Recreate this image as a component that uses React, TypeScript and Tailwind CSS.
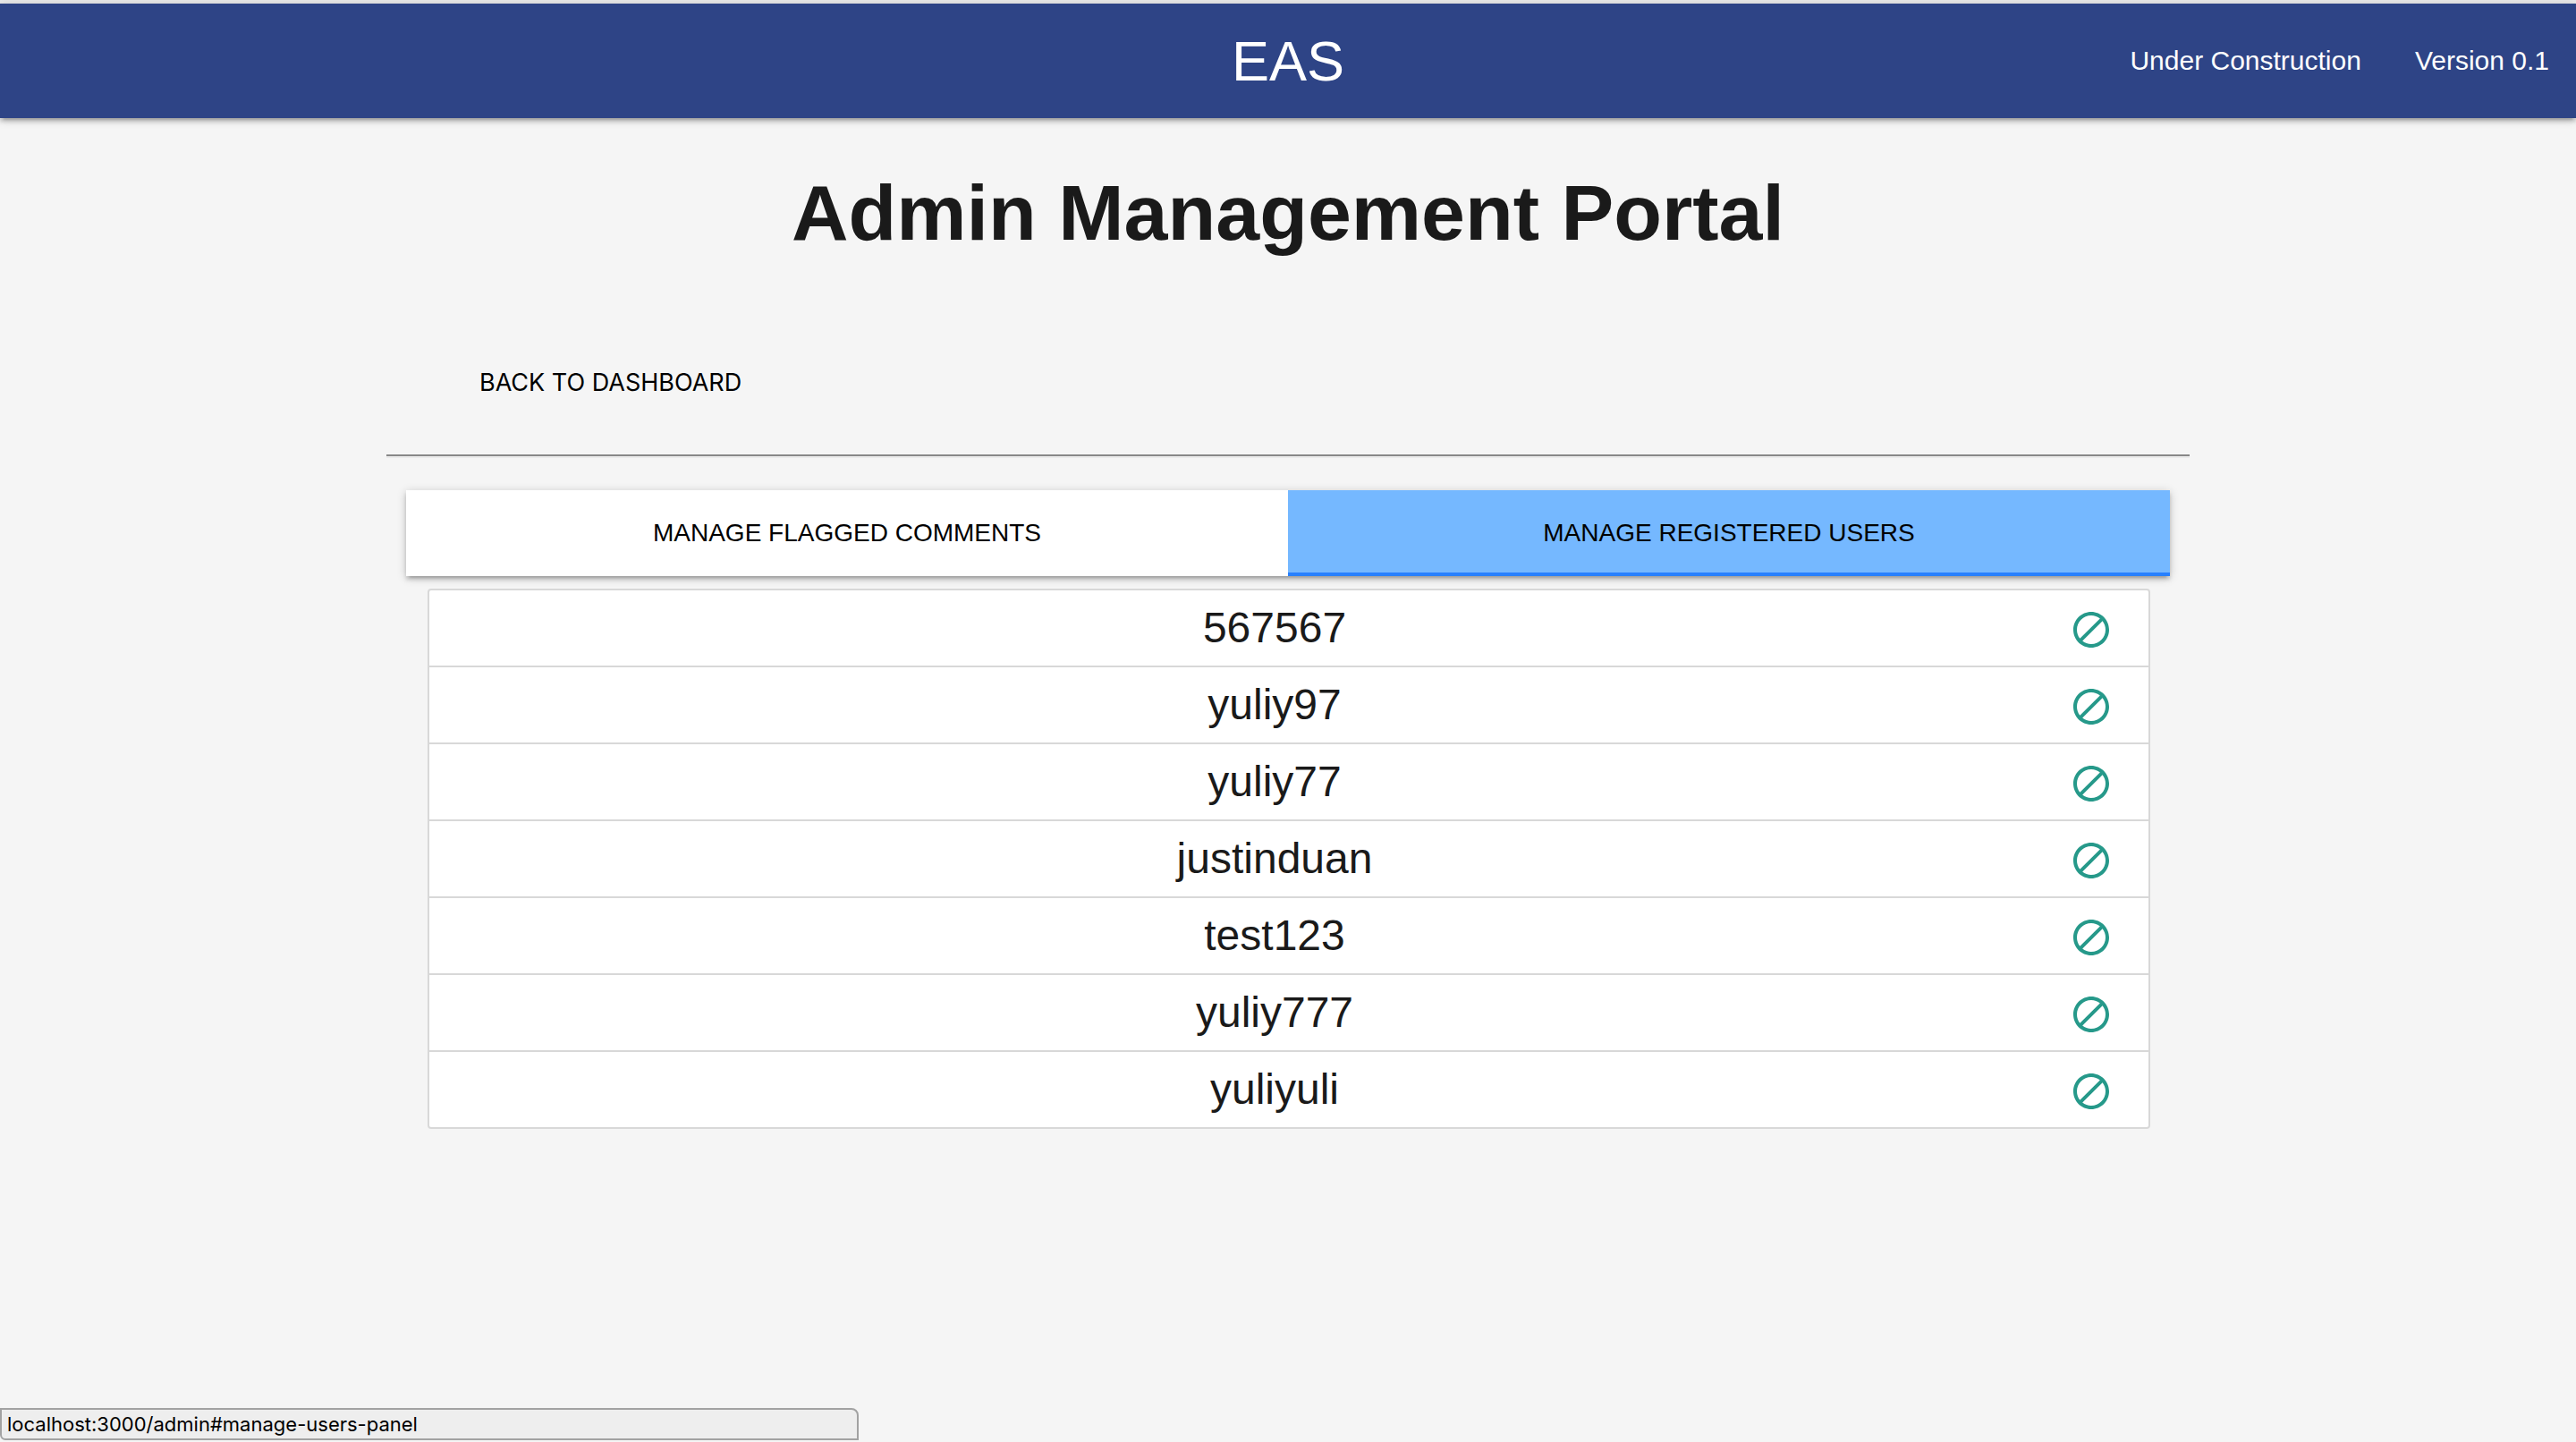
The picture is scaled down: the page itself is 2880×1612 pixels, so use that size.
const users = ["567567", "yuliy97", "yuliy77", "justinduan", "test123", "yuliy777", "yuliyuli"];

const raised =
  "shadow-[0_4px_4px_0_rgba(0,0,0,0.14),0_6px_2px_-4px_rgba(0,0,0,0.12),0_2px_10px_0_rgba(0,0,0,0.2)]";

function BlockIcon() {
  return (
    <svg viewBox="0 0 24 24" className="size-12 fill-current" aria-hidden="true">
      <path d="M12 2C6.48 2 2 6.48 2 12s4.48 10 10 10 10-4.48 10-10S17.52 2 12 2zM4 12c0-4.42 3.58-8 8-8 1.85 0 3.55.63 4.9 1.69L5.69 16.9C4.63 15.55 4 13.85 4 12zm8 8c-1.85 0-3.55-.63-4.9-1.69L18.31 7.1C19.37 8.45 20 10.15 20 12c0 4.42-3.58 8-8 8z" />
    </svg>
  );
}

function Header() {
  return (
    <header className="border-t-4 border-[#ebebeb]">
      <nav className={`grid h-32 grid-cols-[1fr_auto_1fr] items-center bg-[#2e4486] text-white ${raised}`}>
        <a href="#home" className="col-start-2 text-[63px] leading-32">
          EAS
        </a>
        <ul className="flex justify-end text-[30px]">
          <li>
            <a href="#construction" className="block px-[30px] leading-32">
              Under Construction
            </a>
          </li>
          <li>
            <a href="#version" className="block px-[30px] leading-32">
              Version 0.1
            </a>
          </li>
        </ul>
      </nav>
    </header>
  );
}

export default function App() {
  return (
    <div className="flex min-h-screen flex-col bg-[#f5f5f5] font-['Liberation_Sans',Arial,sans-serif] text-[#1a1a1a]">
      <Header />
      <main className="mx-auto w-[70%]">
        <h1 className="mt-14 text-center text-[88px] leading-[100px] font-bold">Admin Management Portal</h1>
        <div className="mt-[104px] flex">
          <a
            href="#dashboard"
            className="ml-11 px-[60px] font-[Inter,'Liberation_Sans',sans-serif] text-[27px] leading-[72px] text-black uppercase"
          >
            Back to dashboard
          </a>
        </div>
        <hr className="mt-11 border-t-2 border-b-2 border-t-[#888] border-b-[#ebebeb]" />
        <section className="mt-9 px-[22px]">
          <ul className={`grid grid-cols-2 bg-white text-center text-[28px] text-black uppercase ${raised}`}>
            <li>
              <a href="#manage-comments-panel" className="block h-24 leading-24">
                Manage flagged comments
              </a>
            </li>
            <li>
              <a
                href="#manage-users-panel"
                className="block h-24 border-b-4 border-[#2780ff] bg-[#75b8ff] leading-24"
              >
                Manage registered users
              </a>
            </li>
          </ul>
          <ul className="mt-3.5 mr-[22px] ml-6 rounded-[4px] border-2 border-[#d8d8d8] bg-white">
            {users.map((user) => (
              <li
                key={user}
                className="flex h-[86px] items-center border-b-2 border-[#d8d8d8] pr-10 pl-14 last:h-21 last:border-b-0"
              >
                <span className="flex-1 text-center text-5xl">{user}</span>
                <button type="button" aria-label={`Block ${user}`} className="mt-1 cursor-pointer text-[#26998a]">
                  <BlockIcon />
                </button>
              </li>
            ))}
          </ul>
        </section>
      </main>
      <div className="fixed bottom-0.5 left-0 w-1/3 rounded-tr-lg rounded-bl-md border-2 border-[#a2a2a2] bg-[#eeeeee] px-1.5 font-[Inter,'Liberation_Sans',sans-serif] text-[22px] leading-8 text-black">
        localhost:3000/admin#manage-users-panel
      </div>
    </div>
  );
}
